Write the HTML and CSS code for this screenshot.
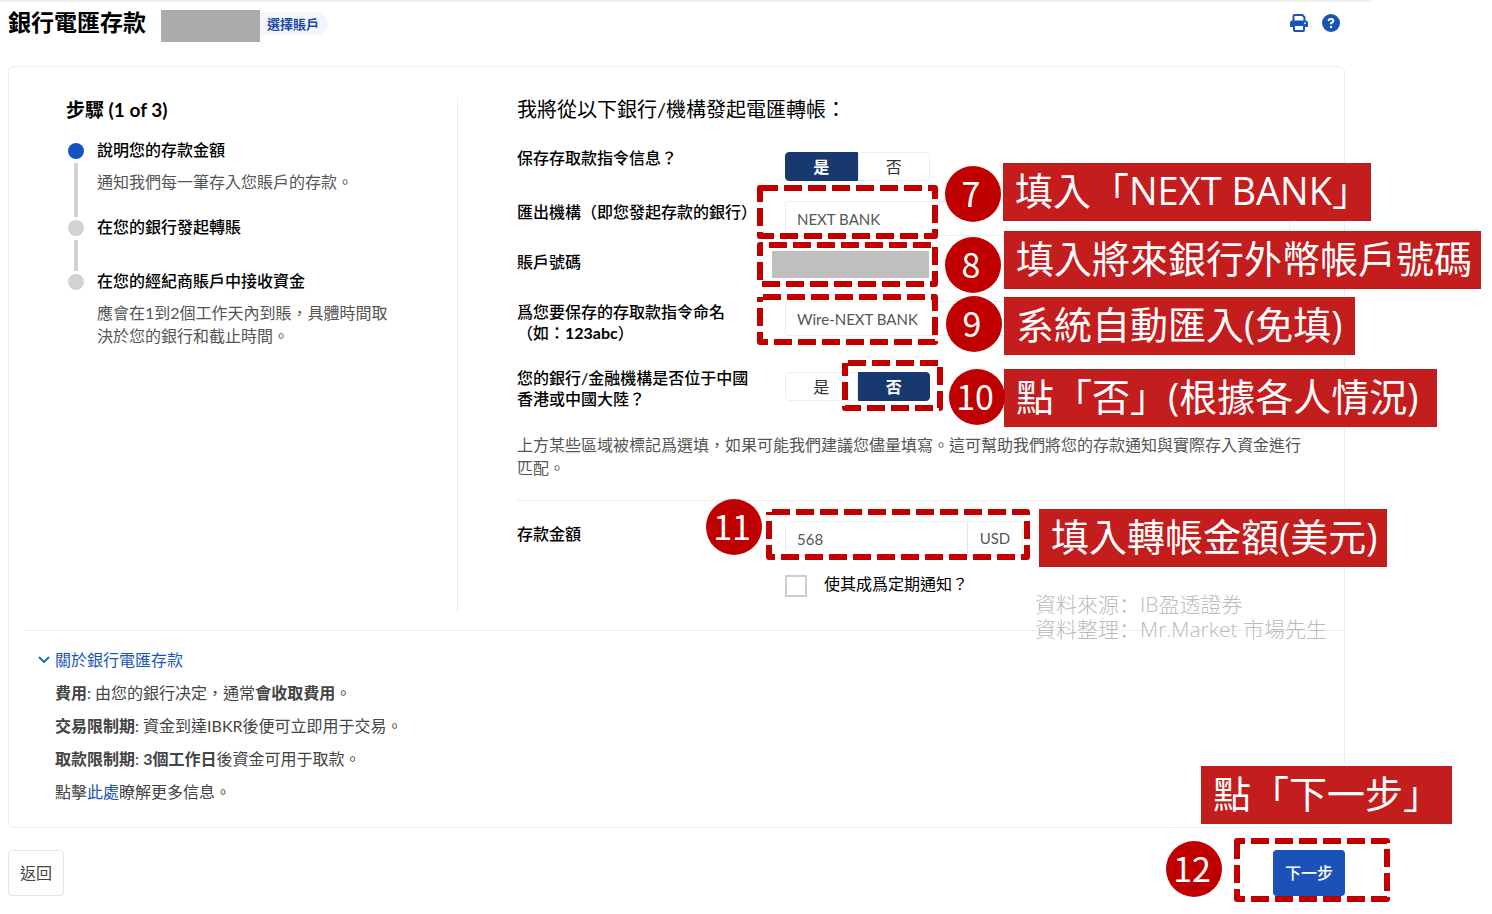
FILE: index.html
```html
<!DOCTYPE html>
<html lang="zh-Hant">
<head>
<meta charset="utf-8">
<title>銀行電匯存款</title>
<meta name="viewport" content="width=device-width, initial-scale=1">
<link rel="stylesheet" href="styles.css">
</head>
<body>
<div class="page">
  <header class="topbar">
    <h1 class="title">銀行電匯存款</h1>
    <span class="account-mask"></span>
    <button type="button" class="account-pick">選擇賬戶</button>
    <div class="tools">
      <button type="button" class="tool" aria-label="列印">
        <svg viewBox="0 0 18 18" width="18" height="18"><path d="M3.500 7V2.500Q3.500 1 5 1H12.300L14.500 3.200V7" fill="none" stroke="#1a52b5" stroke-width="2"/><path d="M2.500 6.500H15.500Q18 6.500 18 9V13H15V11H3V13H0V9Q0 6.500 2.500 6.500Z" fill="#1a52b5"/><rect x="4" y="11" width="10" height="6" rx="1" fill="#fff" stroke="#1a52b5" stroke-width="2"/><circle cx="15" cy="9.200" r=".9" fill="#fff"/></svg>
      </button>
      <button type="button" class="tool" aria-label="說明">
        <svg viewBox="0 0 18 18" width="18" height="18"><circle cx="9" cy="9" r="9" fill="#1a52b5"/><path d="M6.600 7Q6.600 5 9 5T11.400 7Q11.400 8.200 9 9.200V10.300" fill="none" stroke="#fff" stroke-width="1.900"/><circle cx="9" cy="12.900" r="1.200" fill="#fff"/></svg>
      </button>
    </div>
  </header>

  <main class="card">
    <div class="columns">
      <section class="steps">
        <h2 class="steps-title">步驟 (1 of 3)</h2>
        <ol class="step-list">
          <li class="step current"><h3>說明您的存款金額</h3><p>通知我們每一筆存入您賬戶的存款。</p></li>
          <li class="step"><h3>在您的銀行發起轉賬</h3></li>
          <li class="step"><h3>在您的經紀商賬戶中接收資金</h3><p>應會在1到2個工作天內到賬，具體時間取決於您的銀行和截止時間。</p></li>
        </ol>
      </section>

      <form class="form" id="deposit">
        <h2 class="form-title">我將從以下銀行/機構發起電匯轉帳：</h2>
        <div class="row row-save">
          <span class="label">保存存取款指令信息？</span>
          <div class="toggle" role="group" aria-label="保存存取款指令信息"><button type="button" class="on">是</button><button type="button">否</button></div>
        </div>
        <div class="row row-bank">
          <label class="label" for="bank">匯出機構（即您發起存款的銀行）</label>
          <input class="field" id="bank" type="text" value="NEXT BANK">
        </div>
        <div class="row row-account">
          <label class="label" for="account">賬戶號碼</label>
          <input class="field-mask" id="account" type="text">
        </div>
        <div class="row row-name">
          <label class="label" for="name">爲您要保存的存取款指令命名（如：<b>123abc</b>）</label>
          <input class="field" id="name" type="text" value="Wire-NEXT BANK">
        </div>
        <div class="row row-region">
          <span class="label">您的銀行/金融機構是否位于中國香港或中國大陸？</span>
          <div class="toggle" role="group" aria-label="銀行位置"><button type="button">是</button><button type="button" class="on">否</button></div>
        </div>
        <p class="note">上方某些區域被標記爲選填，如果可能我們建議您儘量填寫。這可幫助我們將您的存款通知與實際存入資金進行匹配。</p>
        <hr class="rule">
        <div class="row row-amount">
          <label class="label" for="amount">存款金額</label>
          <div class="amount"><input class="field" id="amount" type="text" value="568"><span class="unit">USD</span></div>
        </div>
        <div class="repeat">
          <input type="checkbox" id="repeat"><label for="repeat">使其成爲定期通知？</label>
        </div>
      </form>
    </div>

    <section class="about">
      <button type="button" class="about-toggle">
        <svg viewBox="0 0 12 8" width="12" height="8"><path d="M1 1L6 6L11 1" fill="none" stroke="#1a6fc0" stroke-width="2"/></svg>關於銀行電匯存款
      </button>
      <p><b>費用</b>: 由您的銀行决定，通常<b>會收取費用</b>。</p>
      <p><b>交易限制期</b>: 資金到達IBKR後便可立即用于交易。</p>
      <p><b>取款限制期</b>: <b>3個工作日</b>後資金可用于取款。</p>
      <p>點擊<a href="#more">此處</a>瞭解更多信息。</p>
    </section>
  </main>

  <footer class="actions">
    <button type="button" class="back">返回</button>
    <div class="next-wrap">
      <button type="submit" form="deposit" class="next">下一步</button>
      <svg class="next-mark" viewBox="0 0 156 64" width="156" height="64"><rect class="dash" x="3" y="3" width="150" height="58" stroke-dashoffset="10"/></svg>
      <span class="callout c12">點「下一步」</span>
      <span class="num n12">12</span>
    </div>
  </footer>

  <svg class="marks" viewBox="0 0 300 400" width="300" height="400">
    <rect class="dash" x="10" y="8" width="175" height="48"/>
    <rect class="dash" x="10" y="65" width="175" height="39" stroke-dashoffset="-9"/>
    <rect class="dash" x="10" y="117" width="175" height="45" stroke-dashoffset="-3"/>
    <rect class="dash" x="95" y="183" width="95" height="45" stroke-dashoffset="-3"/>
    <rect class="dash" x="19" y="332" width="258" height="45" stroke-dashoffset="-3"/>
  </svg>
  <span class="callout c7">填入「NEXT BANK」</span>
  <span class="callout c8">填入將來銀行外幣帳戶號碼</span>
  <span class="callout c9">系統自動匯入(免填)</span>
  <span class="callout c10">點「否」(根據各人情況)</span>
  <span class="callout c11">填入轉帳金額(美元)</span>
  <span class="num n7">7</span>
  <span class="num n8">8</span>
  <span class="num n9">9</span>
  <span class="num n10">10</span>
  <span class="num n11">11</span>
  <p class="credit" lang="zh-CN">資料來源：IB盈透證券<br>資料整理：Mr.Market 市場先生</p>
</div>
</body>
</html>
```
FILE: styles.css
```css
* { box-sizing: border-box; }
body {
  margin: 0;
  background: #fff;
  color: #000;
  font-family: Lato, "Noto Sans CJK TC", sans-serif;
  font-size: 16px;
  line-height: 22px;
}
h1, h2, h3, p, ol { margin: 0; padding: 0; }
button, input { font: inherit; color: inherit; margin: 0; }
button { cursor: pointer; }
a { color: #1a52b5; text-decoration: none; }

.page { position: relative; padding: 0 147px 16px 8px; }
.page::before {
  content: "";
  position: absolute;
  top: 0;
  left: 0;
  right: 120px;
  height: 2px;
  background: #f1f1f1;
}

.topbar { display: flex; align-items: flex-start; height: 66px; padding-top: 10px; }
.title { font-size: 23px; line-height: 24px; font-weight: 700; width: 153px; }
.account-mask { width: 99px; height: 32px; background: #adabaa; }
.account-pick {
  margin-top: 2px;
  height: 23px;
  padding: 0 9px 0 7px;
  border: 0;
  border-radius: 0 12px 12px 0;
  background: #f3f6fd;
  color: #1a4aa5;
  font-size: 13px;
  line-height: 20px;
  font-weight: 700;
}
.tools { display: flex; gap: 14px; margin: 4px 5px 0 auto; }
.tool { display: flex; padding: 0; border: 0; background: none; }

.card { border: 1px solid #eee; border-radius: 6px; }
.columns { display: grid; grid-template-columns: 449px 1fr; padding-top: 30px; }
.steps { min-height: 515px; padding-left: 57px; border-right: 1px solid #eee; }
.steps-title { font-size: 19px; line-height: 26px; font-weight: 700; }
.step-list { list-style: none; margin-top: 16px; }
.step { position: relative; padding-left: 31px; min-height: 54px; }
.step.current { min-height: 77px; }
.step::before {
  content: "";
  position: absolute;
  left: 2px;
  top: 4px;
  width: 16px;
  height: 16px;
  border-radius: 50%;
  background: #d2d2d2;
}
.step.current::before { background: #1552bd; }
.step:not(:last-child)::after {
  content: "";
  position: absolute;
  left: 8px;
  top: 24px;
  bottom: -1px;
  width: 4px;
  background: #d2d2d2;
}
.step h3 { font-size: 16px; font-weight: 500; line-height: 22px; }
.step p { color: #555; line-height: 23px; margin-top: 9px; width: 300px; }

.form { padding-left: 59px; }
.form-title { font-size: 20px; line-height: 24px; font-weight: 400; }
.row { display: grid; grid-template-columns: 242px 1fr; column-gap: 26px; align-items: start; }
.label { font-weight: 500; line-height: 21px; }
.row-save { margin-top: 26px; height: 54px; }
.row-bank { height: 50px; }
.row-account { height: 50px; }
.row-name { height: 66px; }
.row-region { height: 66px; }
.toggle { display: flex; margin-top: 5px; width: 145px; height: 29px; }
.toggle button {
  flex: 1;
  padding: 0;
  border: 1px solid #eee;
  border-radius: 0 4px 4px 0;
  background: #fff;
  color: #333;
  line-height: 20px;
}
.toggle button:first-child { border-radius: 4px 0 0 4px; }
.toggle .on { background: #17396f; border-color: #17396f; color: #fff; font-weight: 700; }
.field {
  width: 100%;
  max-width: 505px;
  height: 35px;
  padding: 0 11px;
  border: 1px solid #eee;
  border-radius: 4px;
  background: #fff;
  color: #555;
  font-size: 15px;
}
.field-mask { width: 157px; height: 27px; margin-left: -13px; border: 0; background: #bfbfbf; }
.note { color: #555; line-height: 23px; margin-right: 38px; }
.rule { margin: 21px 54px 0 0; border: 0; border-top: 1px solid #eee; }
.row-amount { margin-top: 20px; height: 54px; }
.row-amount .label { padding-top: 2px; }
.amount { display: flex; width: 238px; border: 1px solid #eee; border-radius: 4px; height: 35px; }
.amount .field { width: 182px; height: 33px; border: 0; border-right: 1px solid #e3e3e3; border-radius: 0; }
.unit { flex: 1; text-align: center; line-height: 33px; font-size: 15px; color: #555; }
.repeat { display: flex; gap: 17px; padding-left: 268px; line-height: 18px; }
.repeat input { appearance: none; width: 22px; height: 22px; border: 2px solid #ccc; background: #fff; }

.about { margin: 18px 0 0 16px; padding: 18px 0 24px 30px; border-top: 1px solid #eee; color: #444; }
.about-toggle {
  display: flex;
  align-items: center;
  gap: 5px;
  margin-left: -17px;
  padding: 0;
  border: 0;
  background: none;
  color: #1a57b8;
}
.about p { margin-top: 11px; }
.about b { font-weight: 700; }

.actions { display: flex; justify-content: space-between; padding-top: 22px; }
.back { width: 56px; height: 46px; padding: 0; border: 1px solid #e6e6e6; border-radius: 4px; background: #fff; color: #444; }
.next-wrap { position: relative; }
.next { width: 72px; height: 46px; padding: 0; border: 0; border-radius: 4px; background: #1a52b8; color: #fff; font-weight: 500; }

.dash { fill: none; stroke: #c00000; stroke-width: 6; stroke-dasharray: 18 6; stroke-linejoin: round; }
.marks { position: absolute; left: 750px; top: 180px; pointer-events: none; }
.next-mark { position: absolute; right: -45px; top: -12px; pointer-events: none; }
.callout {
  position: absolute;
  height: 58px;
  padding-left: 11px;
  border: 1px solid #b5201f;
  background: #c41d1e;
  color: #fff;
  font-family: "Open Sans", "Noto Sans CJK TC", sans-serif;
  font-size: 38px;
  line-height: 53px;
  white-space: nowrap;
}
.c7 { left: 1003px; top: 163px; width: 368px; }
.c8 { left: 1004px; top: 231px; width: 477px; }
.c9 { left: 1004px; top: 297px; width: 351px; }
.c10 { left: 1004px; top: 369px; width: 433px; }
.c11 { left: 1039px; top: 509px; width: 348px; }
.c12 { right: -107px; top: -84px; width: 251px; }
.num {
  position: absolute;
  width: 56px;
  height: 56px;
  padding-right: 4px;
  border-radius: 50%;
  background: #c00000;
  color: #fff;
  font-family: "Noto Sans CJK TC", sans-serif;
  font-size: 34px;
  line-height: 54px;
  text-align: center;
}
.n7 { left: 945px; top: 166px; }
.n8 { left: 945px; top: 237px; }
.n9 { left: 946px; top: 296px; }
.n10 { left: 949px; top: 369px; }
.n11 { left: 706px; top: 499px; }
.n12 { right: 123px; top: -9px; }
.credit {
  position: absolute;
  left: 1035px;
  top: 592px;
  color: #bbb;
  font-family: "Open Sans", "Noto Sans CJK SC", sans-serif;
  font-size: 21px;
  font-weight: 300;
  line-height: 25px;
  white-space: nowrap;
}
```
